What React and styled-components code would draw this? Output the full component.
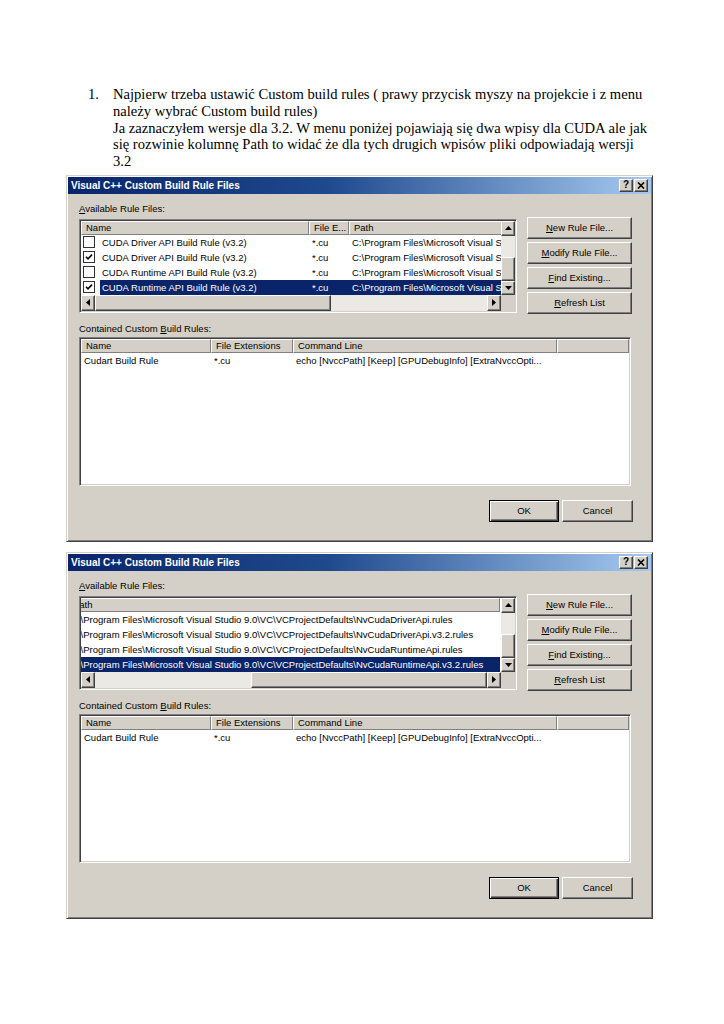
import React from "react";
import styled, { createGlobalStyle, css } from "styled-components";

const GlobalStyle = createGlobalStyle`
  html, body { margin: 0; padding: 0; background: #fff; }
  * { box-sizing: border-box; }
`;

const Page = styled.div`
  width: 724px;
  padding-top: 86px;
`;

const Doc = styled.div`
  display: flex;
  margin-left: 88px;
  font-family: "Liberation Serif", "Times New Roman", serif;
  font-size: 14.6px;
  line-height: 16.8px;
  color: #000;
`;

const Marker = styled.div`
  width: 25px;
  flex: none;
`;

const Line = styled.div`
  white-space: nowrap;
`;

const Window = styled.div`
  width: 587px;
  margin: 5px 0 0 66px;
  background: #d4d0c8;
  border: 1px solid;
  border-color: #d4d0c8 #404040 #404040 #d4d0c8;
  box-shadow: inset 1px 1px #fff, inset -1px -1px #808080;
  padding: 1px;
  font-family: "Liberation Sans", Arial, sans-serif;
  font-size: 9.5px;
  color: #000;
  & + & { margin-top: 10px; }
`;

const TitleBar = styled.div`
  height: 17px;
  display: flex;
  align-items: center;
  justify-content: space-between;
  background: linear-gradient(to right, #0a246a 0%, #1f4a8e 45%, #a6caf0 100%);
  padding: 0 3px 0 3px;
`;

const Title = styled.span`
  color: #fff;
  font-weight: bold;
  font-size: 10px;
`;

const TitleButtons = styled.div`
  display: flex;
  gap: 1px;
`;

const raised = css`
  background: #d4d0c8;
  border: 1px solid;
  border-color: #fff #404040 #404040 #fff;
  box-shadow: inset -1px -1px #808080;
`;

const TitleBtn = styled.div`
  ${raised};
  width: 14px;
  height: 13px;
  display: flex;
  align-items: center;
  justify-content: center;
  font-weight: bold;
  font-size: 10px;
  line-height: 1;
`;

const Body = styled.div`
  padding: 9px 19px 18px 11px;
`;

const Label = styled.div`
  line-height: 12px;
  height: 12px;
  margin-top: ${(p) => p.$mt || 0}px;
  margin-bottom: ${(p) => p.$mb || 0}px;
  ${(p) =>
    p.$firstKey &&
    css`
      &::first-letter { text-decoration: underline; }
    `}
`;

const Key = styled.span`
  text-decoration: underline;
  text-underline-offset: 1px;
`;

const TopRow = styled.div`
  display: flex;
  gap: 10px;
  align-items: flex-start;
`;

const Sunken = styled.div`
  background: #fff;
  border: 1px solid;
  border-color: #808080 #fff #fff #808080;
  box-shadow: inset 1px 1px #404040, inset -1px -1px #d4d0c8;
  padding: 1px;
`;

const RuleList = styled(Sunken)`
  width: 439px;
  height: 94px;
  display: grid;
  grid-template-columns: 1fr 14px;
  grid-template-rows: 1fr 16px;
`;

const Viewport = styled.div`
  overflow: hidden;
`;

const Strip = styled.div`
  width: 700px;
  margin-left: -${(p) => p.$offset}px;
`;

const HeaderRow = styled.div`
  display: grid;
  grid-template-columns: ${(p) => p.$cols};
  height: 14px;
  background: #d4d0c8;
`;

const HeaderCell = styled.div`
  border: 1px solid;
  border-color: #fff #808080 #808080 #fff;
  padding-left: 4px;
  line-height: 12px;
  white-space: nowrap;
  overflow: hidden;
`;

const Row = styled.div`
  display: grid;
  grid-template-columns: ${(p) => p.$cols};
  height: 15px;
  align-items: stretch;
`;

const Cell = styled.div`
  line-height: 15px;
  white-space: nowrap;
  overflow: hidden;
  padding-left: ${(p) => (p.$pl !== undefined ? p.$pl : 3)}px;
  background: ${(p) => (p.$sel ? "#0a246a" : "transparent")};
  color: ${(p) => (p.$sel ? "#fff" : "#000")};
`;

const CheckCell = styled.div`
  display: flex;
  align-items: center;
  padding-left: 2px;
`;

const Box = styled.div`
  width: 12px;
  height: 12px;
  border: 1.5px solid #333;
  background: #fff;
  display: flex;
  align-items: center;
  justify-content: center;
`;

const VScroll = styled.div`
  display: flex;
  flex-direction: column;
  background: #ebe9e4;
`;

const HScroll = styled.div`
  display: flex;
  background: #ebe9e4;
`;

const Arrow = styled.div`
  ${raised};
  flex: none;
  width: ${(p) => p.$w}px;
  height: ${(p) => p.$h}px;
  display: flex;
  align-items: center;
  justify-content: center;
`;

const Thumb = styled.div`
  ${raised};
  flex: none;
  ${(p) => p.$w && `width: ${p.$w}px;`}
  ${(p) => p.$h && `height: ${p.$h}px;`}
`;

const Track = styled.div`
  flex: 1;
`;

const Corner = styled.div`
  background: #d4d0c8;
`;

const ButtonCol = styled.div`
  display: flex;
  flex-direction: column;
  gap: 3px;
  margin-top: -2px;
`;

const Button = styled.div`
  ${raised};
  width: ${(p) => p.$w}px;
  height: 22px;
  display: flex;
  align-items: center;
  justify-content: center;
  ${(p) =>
    p.$default &&
    css`
      border-color: #000;
      box-shadow: inset 1px 1px #fff, inset -1px -1px #404040, inset -2px -2px #808080;
    `}
`;

const ButtonText = styled.span`
  display: inline-block;
  line-height: 12px;
  white-space: nowrap;
  ${(p) =>
    p.$key &&
    css`
      &::first-letter { text-decoration: underline; }
    `}
`;

const RulesList = styled(Sunken)`
  width: 552px;
  height: 149px;
  overflow: hidden;
`;

const Footer = styled.div`
  display: flex;
  justify-content: flex-end;
  gap: 3px;
  margin-top: 14px;
  margin-right: -1px;
`;

const TriUp = () => (
  <svg width="7" height="4" viewBox="0 0 7 4"><path d="M3.5 0L7 4H0z" fill="#000" /></svg>
);
const TriDown = () => (
  <svg width="7" height="4" viewBox="0 0 7 4"><path d="M0 0h7L3.5 4z" fill="#000" /></svg>
);
const TriLeft = () => (
  <svg width="4" height="7" viewBox="0 0 4 7"><path d="M4 0v7L0 3.5z" fill="#000" /></svg>
);
const TriRight = () => (
  <svg width="4" height="7" viewBox="0 0 4 7"><path d="M0 0l4 3.5L0 7z" fill="#000" /></svg>
);
const Tick = () => (
  <svg width="8" height="8" viewBox="0 0 8 8">
    <path d="M1 3.8l2 2L7 1.6" stroke="#000" strokeWidth="1.6" fill="none" />
  </svg>
);

const PATH = "C:\\Program Files\\Microsoft Visual Studio 9.0\\VC\\VCProjectDefaults\\";
const rules = [
  { name: "CUDA Driver API Build Rule (v3.2)", checked: false, file: "NvCudaDriverApi.rules" },
  { name: "CUDA Driver API Build Rule (v3.2)", checked: true, file: "NvCudaDriverApi.v3.2.rules" },
  { name: "CUDA Runtime API Build Rule (v3.2)", checked: false, file: "NvCudaRuntimeApi.rules" },
  { name: "CUDA Runtime API Build Rule (v3.2)", checked: true, file: "NvCudaRuntimeApi.v3.2.rules", sel: true },
];

const TOP_COLS = "228px 40px 1fr";
const ROW_COLS = "19px 209px 40px 1fr";
const LOW_COLS = "130px 82px 264px 1fr";

const sideButtons = ["New Rule File...", "Modify Rule File...", "Find Existing...", "Refresh List"];

function Dialog({ offset }) {
  const trackBefore = offset > 0;
  return (
    <Window>
      <TitleBar>
        <Title>Visual C++ Custom Build Rule Files</Title>
        <TitleButtons>
          <TitleBtn>?</TitleBtn>
          <TitleBtn>
            <svg width="8" height="7" viewBox="0 0 8 7">
              <path d="M1 0.5l6 6M7 0.5l-6 6" stroke="#000" strokeWidth="1.6" />
            </svg>
          </TitleBtn>
        </TitleButtons>
      </TitleBar>
      <Body>
        <Label $mb={4} $firstKey>Available Rule Files:</Label>
        <TopRow>
          <RuleList>
            <Viewport>
              <Strip $offset={offset}>
                <HeaderRow $cols={TOP_COLS}>
                  <HeaderCell>Name</HeaderCell>
                  <HeaderCell>File E...</HeaderCell>
                  <HeaderCell>Path</HeaderCell>
                </HeaderRow>
                {rules.map((r, i) => (
                  <Row key={i} $cols={ROW_COLS}>
                    <CheckCell>
                      <Box>{r.checked && <Tick />}</Box>
                    </CheckCell>
                    <Cell $sel={r.sel} $pl={2}>{r.name}</Cell>
                    <Cell $sel={r.sel}>*.cu</Cell>
                    <Cell $sel={r.sel}>{PATH + r.file}</Cell>
                  </Row>
                ))}
              </Strip>
            </Viewport>
            <VScroll>
              <Arrow $w={14} $h={15}><TriUp /></Arrow>
              <Track />
              <Thumb $h={24} />
              <Arrow $w={14} $h={14}><TriDown /></Arrow>
            </VScroll>
            <HScroll>
              <Arrow $w={14} $h={16}><TriLeft /></Arrow>
              {trackBefore && <Track />}
              <Thumb $w={236} />
              {!trackBefore && <Track />}
              <Arrow $w={14} $h={16}><TriRight /></Arrow>
            </HScroll>
            <Corner />
          </RuleList>
          <ButtonCol>
            {sideButtons.map((b) => (
              <Button key={b} $w={105}>
                <ButtonText $key>{b}</ButtonText>
              </Button>
            ))}
          </ButtonCol>
        </TopRow>
        <Label $mt={9} $mb={2}>
          Contained Custom <Key>B</Key>uild Rules:
        </Label>
        <RulesList>
          <HeaderRow $cols={LOW_COLS}>
            <HeaderCell>Name</HeaderCell>
            <HeaderCell>File Extensions</HeaderCell>
            <HeaderCell>Command Line</HeaderCell>
            <HeaderCell />
          </HeaderRow>
          <Row $cols={LOW_COLS}>
            <Cell>Cudart Build Rule</Cell>
            <Cell>*.cu</Cell>
            <Cell>echo [NvccPath] [Keep] [GPUDebugInfo] [ExtraNvccOpti...</Cell>
            <Cell />
          </Row>
        </RulesList>
        <Footer>
          <Button $w={70} $default><ButtonText>OK</ButtonText></Button>
          <Button $w={71}><ButtonText>Cancel</ButtonText></Button>
        </Footer>
      </Body>
    </Window>
  );
}

export default function App() {
  return (
    <Page>
      <GlobalStyle />
      <Doc>
        <Marker>1.</Marker>
        <div>
          <Line>Najpierw trzeba ustawić Custom build rules ( prawy przycisk myszy na projekcie i z menu</Line>
          <Line>należy wybrać Custom build rules)</Line>
          <Line>Ja zaznaczyłem wersje dla 3.2. W menu poniżej pojawiają się dwa wpisy dla CUDA ale jak</Line>
          <Line>się rozwinie kolumnę Path to widać że dla tych drugich wpisów pliki odpowiadają wersji</Line>
          <Line>3.2</Line>
        </div>
      </Doc>
      <Dialog offset={0} />
      <Dialog offset={281} />
    </Page>
  );
}
